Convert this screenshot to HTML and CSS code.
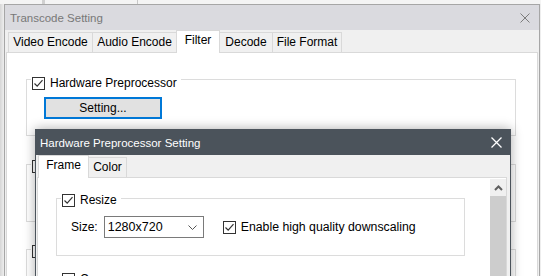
FILE: index.html
```html
<!DOCTYPE html>
<html lang="en">
<head>
    <meta charset="UTF-8">
    <title>Transcode Setting</title>
    <link rel="stylesheet" href="styles.css">
</head>
<body>
    <div class="backdrop">
        <span class="backdrop-cell w1"></span>
        <span class="backdrop-cell w2"></span>
    </div>

    <!-- main dialog -->
    <div class="window outer">
        <div class="titlebar">
            <span class="title">Transcode Setting</span>
            <svg class="close" width="10" height="10" viewBox="0 0 10 10">
                <path d="M0.5 0.5 L9.5 9.5 M9.5 0.5 L0.5 9.5" stroke="#7c7c7c" stroke-width="1"/>
            </svg>
        </div>
        <div class="client">
            <div class="tabs">
                <div class="tab" style="width:85px">Video Encode</div>
                <div class="tab" style="width:85px">Audio Encode</div>
                <div class="tab active" style="width:44px">Filter</div>
                <div class="tab" style="width:54px">Decode</div>
                <div class="tab" style="width:70px">File Format</div>
            </div>
            <div class="panel outer-panel">
                <div class="group g-hw">
                    <div class="legend">
                        <span class="check"><svg width="11" height="11" viewBox="0 0 11 11"><path d="M1.5 5.5 L4.2 8.2 L9.5 2.2" fill="none" stroke="#333" stroke-width="1.2"/></svg></span>
                        <span>Hardware Preprocessor</span>
                    </div>
                    <button class="button">Setting...</button>
                </div>
                <!-- these two sit behind the child dialog -->
                <div class="group g-mid">
                    <div class="legend">
                        <span class="check"></span>
                    </div>
                </div>
                <div class="group g-low">
                    <div class="legend">
                        <span class="check"></span>
                    </div>
                </div>
            </div>
        </div>
    </div>

    <!-- child dialog -->
    <div class="window inner">
        <div class="titlebar dark">
            <span class="title">Hardware Preprocessor Setting</span>
            <svg class="close" width="11" height="11" viewBox="0 0 11 11">
                <path d="M0.5 0.5 L10.5 10.5 M10.5 0.5 L0.5 10.5" stroke="#fff" stroke-width="1.3"/>
            </svg>
        </div>
        <div class="client">
            <div class="tabs inner-tabs">
                <div class="tab active" style="width:51px">Frame</div>
                <div class="tab" style="width:39px">Color</div>
            </div>
            <div class="panel inner-panel">
                <div class="scroll-content">
                    <div class="group g-resize">
                        <div class="legend">
                            <span class="check"><svg width="11" height="11" viewBox="0 0 11 11"><path d="M1.5 5.5 L4.2 8.2 L9.5 2.2" fill="none" stroke="#333" stroke-width="1.2"/></svg></span>
                            <span>Resize</span>
                        </div>
                        <div class="field-row">
                            <span class="field-label">Size:</span>
                            <div class="combo">
                                <span>1280x720</span>
                                <svg width="9" height="5" viewBox="0 0 9 5"><path d="M0.5 0.5 L4.5 4.5 L8.5 0.5" fill="none" stroke="#555" stroke-width="1"/></svg>
                            </div>
                            <span class="check"><svg width="11" height="11" viewBox="0 0 11 11"><path d="M1.5 5.5 L4.2 8.2 L9.5 2.2" fill="none" stroke="#333" stroke-width="1.2"/></svg></span>
                            <span class="check-label">Enable high quality downscaling</span>
                        </div>
                    </div>
                    <div class="group g-crop">
                        <div class="legend">
                            <span class="check"></span>
                            <span>Crop</span>
                        </div>
                    </div>
                </div>
                <div class="scrollbar">
                    <div class="scroll-btn">
                        <svg width="9" height="6" viewBox="0 0 9 6"><path d="M1 5 L4.5 1.5 L8 5" fill="none" stroke="#606060" stroke-width="2"/></svg>
                    </div>
                    <div class="scroll-thumb"></div>
                </div>
            </div>
        </div>
    </div>
</body>
</html>
```

FILE: styles.css
```css
body {
    margin: 0;
    width: 541px;
    height: 276px;
    overflow: hidden;
    background: linear-gradient(to right, #d6d6d6, #eeeeee 4px);
    font-family: "Liberation Sans", Arial, sans-serif;
    font-size: 12px;
    color: #000;
    position: relative;
}
.backdrop {
    height: 4px;
    background-color: #f4f4f4;
    display: flex;
}
.backdrop-cell {
    height: 4px;
    border-right: 1px solid #c8c8c8;
}
.backdrop-cell.w1 {
    width: 42px;
    border-right: 3px solid #d0d0d0;
}
.backdrop-cell.w2 {
    width: 92px;
}
.window {
    position: absolute;
    box-sizing: border-box;
    display: flex;
    flex-direction: column;
}
.outer {
    left: 4px;
    top: 4px;
    width: 536px;
    height: 290px;
    border: 1px solid #a6a6a6;
    background-color: #f0f0f0;
}
.inner {
    left: 35px;
    top: 129px;
    width: 476px;
    height: 170px;
    border: 1px solid #4b535b;
    background-color: #f0f0f0;
    box-shadow: 0 0 11px rgba(0, 0, 0, 0.33);
}
.titlebar {
    height: 25px;
    flex: none;
    display: flex;
    align-items: center;
    background-color: #dadadf;
    color: #787878;
    font-size: 11.5px;
    padding-left: 5px;
}
.titlebar .close {
    margin-left: auto;
    margin-right: 9px;
}
.titlebar.dark {
    background-color: #4b535b;
    color: #fff;
    padding-left: 4px;
}
.titlebar.dark .close {
    margin-right: 8px;
}
.client {
    flex: 1;
    display: flex;
    flex-direction: column;
    padding: 0 1px 0 1px;
}
.tabs {
    height: 22px;
    flex: none;
    display: flex;
    align-items: flex-end;
    padding-left: 2px;
}
.tab {
    box-sizing: border-box;
    height: 20px;
    border: 1px solid #d9d9d9;
    border-bottom: none;
    margin-right: -1px;
    text-align: center;
    line-height: 19px;
    white-space: nowrap;
    background-color: #f0f0f0;
}
.tab.active {
    height: 23px;
    margin-bottom: -1px;
    background-color: #fff;
    position: relative;
    z-index: 1;
    line-height: 19px;
    padding-bottom: 2px;
}
.panel {
    flex: 1;
    background-color: #fff;
    border: 1px solid #d9d9d9;
}
.outer-panel {
    padding: 0 21px 0 19px;
}
.group {
    box-sizing: border-box;
    border: 1px solid #dcdcdc;
}
.legend {
    display: flex;
    width: max-content;
    align-items: center;
    height: 14px;
    background-color: #fff;
    padding: 0 4px 0 1px;
    margin-left: 4px;
    gap: 5px;
    white-space: nowrap;
}
.check {
    box-sizing: border-box;
    width: 13px;
    height: 13px;
    flex: none;
    border: 1px solid #333;
    background-color: #fff;
    display: inline-flex;
    align-items: center;
    justify-content: center;
}
.g-hw {
    margin-top: 26px;
    height: 57px;
}
.g-hw .legend {
    margin-top: -4px;
}
.button {
    display: block;
    box-sizing: border-box;
    width: 118px;
    height: 22px;
    margin: 7px 0 0 17px;
    border: 2px solid #0078d7;
    background-color: #e1e1e1;
    font-family: inherit;
    font-size: 12px;
    color: #000;
    padding: 0;
}
.g-mid {
    margin-top: 28px;
    height: 58px;
}
.g-low {
    margin-top: 27px;
    height: 58px;
}
.g-mid .legend,
.g-low .legend,
.g-resize .legend,
.g-crop .legend {
    margin-top: -6px;
}
.inner-tabs {
    padding-left: 1px;
}
.inner-panel {
    display: flex;
    margin: 0 2px 0 0;
}
.scroll-content {
    flex: 1;
    padding: 0 25px 0 18px;
}
.g-resize {
    margin-top: 20px;
    width: 409px;
    height: 58px;
}
.field-row {
    display: flex;
    align-items: center;
    margin: 9px 0 0 14px;
}
.field-label {
    margin-right: 6px;
}
.combo {
    box-sizing: border-box;
    width: 100px;
    height: 22px;
    border: 1px solid #7a7a7a;
    display: flex;
    align-items: center;
    justify-content: space-between;
    padding: 0 6px 0 3px;
    margin-right: 19px;
    font-size: 12.5px;
}
.check-label {
    margin-left: 5px;
    font-size: 12.3px;
}
.g-crop {
    margin-top: 21px;
    width: 409px;
    height: 58px;
}
.scrollbar {
    width: 16px;
    flex: none;
    margin: 1px 1px 0 0;
    display: flex;
    flex-direction: column;
}
.scroll-btn {
    height: 17px;
    background-color: #f0f0f0;
    display: flex;
    align-items: center;
    justify-content: center;
}
.scroll-thumb {
    flex: 1;
    background-color: #cdcdcd;
}
```
